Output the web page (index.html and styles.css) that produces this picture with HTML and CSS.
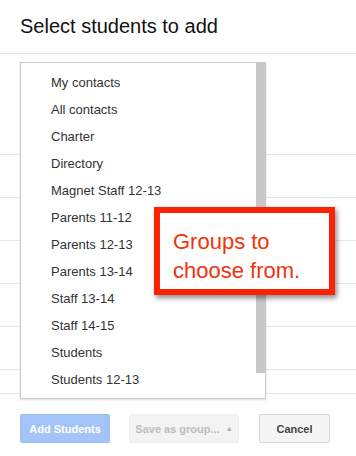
FILE: index.html
```html
<!doctype html>
<html>
<head>
	<meta http-equiv="content-type" content="text/html;charset=utf-8"/>
	<title>Select students to add</title>
	<link rel="stylesheet" href="styles.css">
</head>
<body>
	<div id="dialog">
		<h1 class="title">Select students to add</h1>
		<div class="content">
			<div class="rows">
				<div class="row"></div>
				<div class="row"></div>
				<div class="row"></div>
				<div class="row"></div>
				<div class="row"></div>
				<div class="row"></div>
			</div>

			<!-- group picker, open over the student list -->
			<div class="menu">
				<ul class="menu-list">
					<li>My contacts</li>
					<li>All contacts</li>
					<li>Charter</li>
					<li>Directory</li>
					<li>Magnet Staff 12-13</li>
					<li>Parents 11-12</li>
					<li>Parents 12-13</li>
					<li>Parents 13-14</li>
					<li>Staff 13-14</li>
					<li>Staff 14-15</li>
					<li>Students</li>
					<li>Students 12-13</li>
				</ul>
				<div class="scrollbar"></div>
			</div>

			<div class="callout">Groups to<br/>choose from.</div>
		</div>
		<div class="footer">
			<button class="btn btn-blue">Add Students</button>
			<button class="btn btn-disabled">Save as group... <span class="arrow">&#9650;</span></button>
			<button class="btn btn-plain">Cancel</button>
		</div>
	</div>
</body>
</html>
```

FILE: styles.css
```css
body {
    margin: 0;
    background: #ffffff;
    font-family: Arial, "Liberation Sans", sans-serif;
    color: #333333;
}
#dialog {
    width: 356px;
    height: 456px;
    overflow: hidden;
}
.title {
    margin: 0;
    height: 53px;
    padding: 0 0 0 20px;
    font-size: 20px;
    font-weight: normal;
    line-height: 53px;
    color: #111111;
    border-bottom: 1px solid #e5e5e5;
    box-sizing: content-box;
}

/* the list behind the menu */
.content {
    position: relative;
    height: 339px;
}
.rows {
    position: absolute;
    left: 0;
    right: 0;
    top: 100px;
    height: 239px;
    overflow: hidden;
}
.row {
    height: 42px;
    border-top: 1px solid #e5e5e5;
}

.menu {
    position: absolute;
    left: 20px;
    top: 8px;
    width: 244px;
    height: 335px;
    background: #ffffff;
    border: 1px solid #c9c9c9;
    box-shadow: 0 1px 2px rgba(0, 0, 0, 0.15);
}
.menu-list {
    list-style: none;
    margin: 0;
    padding: 6px 0 0 30px;
}
.menu-list li {
    height: 27px;
    line-height: 27px;
    font-size: 13px;
    color: #333333;
}
.scrollbar {
    position: absolute;
    right: 0;
    top: 0;
    width: 9px;
    height: 310px;
    background: #c8c8c8;
}

.callout {
    position: absolute;
    left: 154px;
    top: 153px;
    width: 149px;
    height: 62px;
    padding: 14px 7px 0 13px;
    border: 6px solid #ff2200;
    background: #ffffff;
    box-shadow: 2px 3px 5px rgba(0, 0, 0, 0.45);
    font-size: 22px;
    line-height: 29px;
    color: #f2330c;
}

/* buttons */
.footer {
    display: flex;
    gap: 19px;
    padding: 20px 0 0 20px;
    border-top: 1px solid #e5e5e5;
}
.btn {
    height: 29px;
    padding: 0;
    border-radius: 2px;
    font-family: Arial, "Liberation Sans", sans-serif;
    font-size: 11px;
    font-weight: bold;
}
.btn-blue {
    width: 90px;
    background: #a3c4f8;
    border: 1px solid #9bbdf2;
    color: #ffffff;
}
.btn-disabled {
    width: 110px;
    background: #f3f3f3;
    border: 1px solid #eeeeee;
    color: #bdbdbd;
}
.btn-disabled .arrow {
    font-size: 7px;
    margin-left: 3px;
    vertical-align: 2px;
    color: #a5a5a5;
}
.btn-plain {
    width: 71px;
    margin-left: 1px;
    background: #f5f5f5;
    border: 1px solid #d6d6d6;
    color: #444444;
}
```
